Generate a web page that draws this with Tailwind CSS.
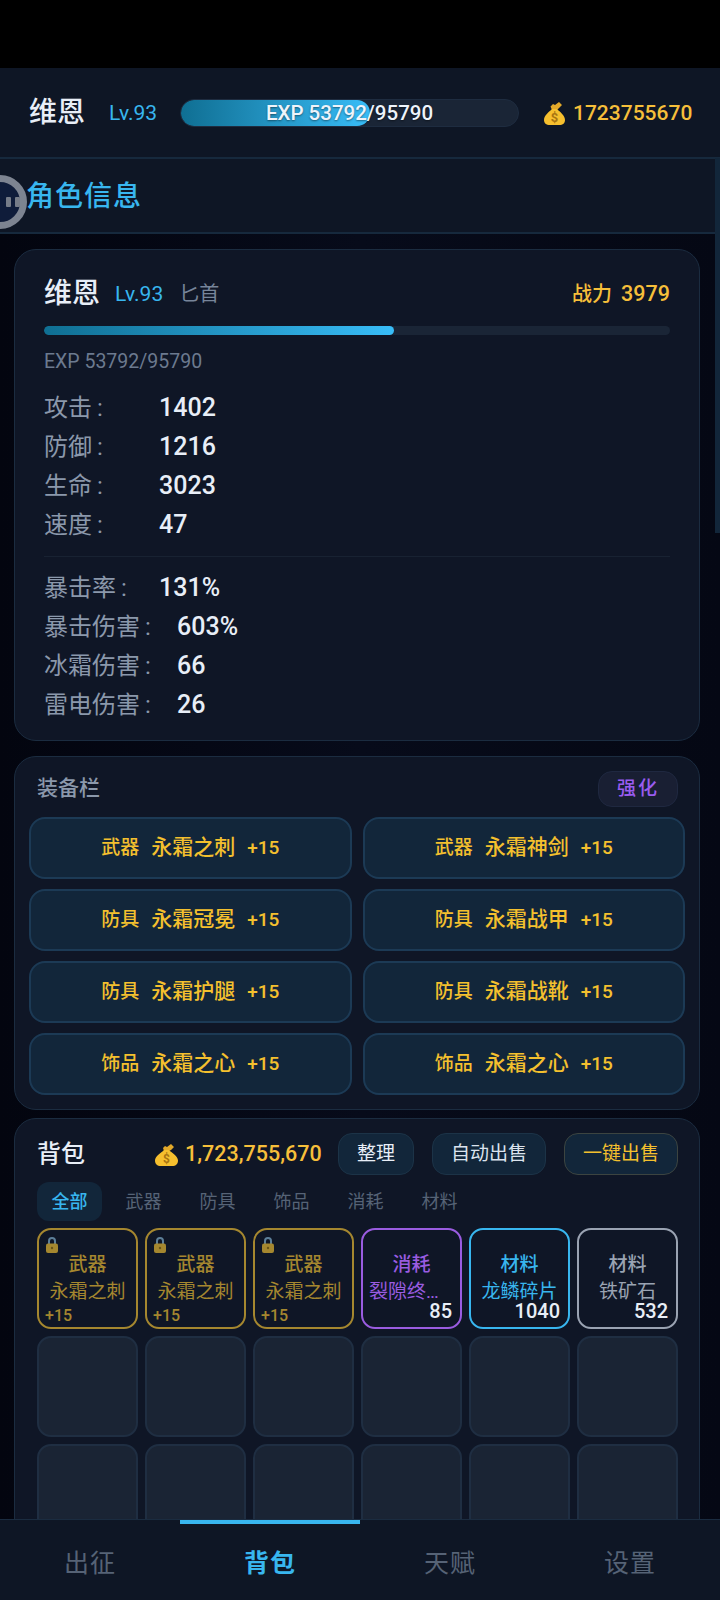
<!DOCTYPE html>
<html lang="en">
<head>
  <meta charset="UTF-8" />
  <title>角色信息</title>
  <script src="https://cdn.jsdelivr.net/npm/@tailwindcss/browser@4"></script>
</head>
<body class="bg-black font-['Roboto','Noto_Sans_CJK_SC',sans-serif] text-white">
  <div class="relative w-[720px] h-[1600px] overflow-hidden flex flex-col">
    <div class="h-[68px] bg-black shrink-0"></div>

    <!-- top bar -->
    <header class="h-[91px] shrink-0 bg-[#0e1625] border-b-2 border-[#16293d] flex items-center pl-[29px] pt-[1px] whitespace-nowrap">
      <span class="w-[57px] shrink-0 text-[28px] font-medium text-[#e8eef7] leading-none">维恩</span>
      <span class="ml-[23px] w-[50px] shrink-0 text-[21px] text-[#38b6ef] leading-none">Lv.93</span>
      <div class="relative ml-[21px] w-[339px] shrink-0 h-[28px] rounded-full bg-[#1a2536] border border-[#1e2c40] overflow-hidden">
        <div class="h-full w-[189px] rounded-full bg-gradient-to-r from-[#0f6f93] to-[#38bdf8]"></div>
        <div class="absolute inset-0 flex items-center justify-center text-[20.5px] font-medium text-[#eef4fb] leading-none [text-shadow:0_1px_2px_rgba(0,0,0,0.45)]">EXP 53792/95790</div>
      </div>
      <svg class="ml-[25px] w-[21px] h-[24px] shrink-0" viewBox="0 0 21 24">
        <path d="M6.5 5.5 9 3l2 1 4-3 3 3-3 3-2 2H8z" fill="#e3a92a"/>
        <path d="M8 8h5c3 3 8 6.500 8 11 0 3-2 5-6 5H6c-4 0-6-2-6-5 0-4.500 5-8 8-11z" fill="#f6bf2e"/>
        <text x="10.5" y="21" text-anchor="middle" font-size="13" font-weight="700" fill="#a87412">$</text>
      </svg>
      <span class="ml-[8px] text-[21px] font-medium text-[#f6bf3a] leading-none">1723755670</span>
    </header>

    <!-- page title -->
    <div class="h-[75px] shrink-0 bg-[#0e1625] border-b-2 border-[#16293d] flex items-center pl-[26px] pt-[2px]">
      <span class="text-[28px] tracking-[1px] font-medium text-[#38b6ef] leading-none">角色信息</span>
    </div>

    <!-- scroll area -->
    <main class="flex-1 min-h-0 overflow-hidden bg-gradient-to-r from-[#03050f] via-[#070b1a] to-[#050814] pl-[14px] pr-[20px] pt-[15px]">
      <section class="h-[492px] rounded-[22px] border border-[#1b2c40] bg-[#0f1626] px-[29px] pt-[25px]">
        <div class="flex items-center h-[38px]">
          <span class="text-[28px] font-medium text-[#e8eef7] leading-none">维恩</span>
          <span class="ml-[15px] text-[21px] text-[#38b6ef] leading-none">Lv.93</span>
          <span class="ml-[16px] text-[20px] text-[#77859a] leading-none">匕首</span>
          <span class="ml-auto text-[20px] font-medium text-[#f6bf3a] leading-none">战力</span>
          <span class="ml-[9px] text-[21.500px] font-medium text-[#f6bf3a] leading-none">3979</span>
        </div>
        <div class="mt-[13px] h-[9px] rounded-full bg-[#1a2536] overflow-hidden">
          <div class="h-full w-[350px] rounded-full bg-gradient-to-r from-[#0f6f93] to-[#38bdf8]"></div>
        </div>
        <p class="mt-[15px] text-[19.500px] text-[#6c7a8f] leading-[24px]">EXP 53792/95790</p>

        <dl class="mt-[14px]">
          <div class="flex items-center h-[39px]"><dt class="w-[115px] text-[24px] text-[#8b98ab]">攻击&thinsp;:</dt><dd class="text-[25px] font-medium text-[#e8eef7]">1402</dd></div>
          <div class="flex items-center h-[39px]"><dt class="w-[115px] text-[24px] text-[#8b98ab]">防御&thinsp;:</dt><dd class="text-[25px] font-medium text-[#e8eef7]">1216</dd></div>
          <div class="flex items-center h-[39px]"><dt class="w-[115px] text-[24px] text-[#8b98ab]">生命&thinsp;:</dt><dd class="text-[25px] font-medium text-[#e8eef7]">3023</dd></div>
          <div class="flex items-center h-[39px]"><dt class="w-[115px] text-[24px] text-[#8b98ab]">速度&thinsp;:</dt><dd class="text-[25px] font-medium text-[#e8eef7]">47</dd></div>
        </dl>
        <div class="mt-[12px] border-t border-[#182232]"></div>
        <dl class="mt-[11px]">
          <div class="flex items-center h-[39px]"><dt class="w-[115px] text-[24px] text-[#8b98ab]">暴击率&thinsp;:</dt><dd class="text-[25px] font-medium text-[#e8eef7]">131%</dd></div>
          <div class="flex items-center h-[39px]"><dt class="w-[133px] text-[24px] text-[#8b98ab]">暴击伤害&thinsp;:</dt><dd class="text-[25px] font-medium text-[#e8eef7]">603%</dd></div>
          <div class="flex items-center h-[39px]"><dt class="w-[133px] text-[24px] text-[#8b98ab]">冰霜伤害&thinsp;:</dt><dd class="text-[25px] font-medium text-[#e8eef7]">66</dd></div>
          <div class="flex items-center h-[39px]"><dt class="w-[133px] text-[24px] text-[#8b98ab]">雷电伤害&thinsp;:</dt><dd class="text-[25px] font-medium text-[#e8eef7]">26</dd></div>
        </dl>
      </section>

      <section class="mt-[15px] h-[354px] rounded-[22px] border border-[#1b2c40] bg-[#0f1626] px-[14px] pt-[14px]">
        <div class="flex items-center justify-between h-[36px] pl-[8px] pr-[7px]">
          <span class="text-[21px] font-medium text-[#8b98ab]">装备栏</span>
          <button class="w-[80px] h-[36px] rounded-[14px] bg-[#191f33] border border-[#1f2840] text-[19px] tracking-[2px] font-medium text-[#9a5cf0]">强化</button>
        </div>
        <div class="mt-[10px] grid grid-cols-2 gap-x-[11px] gap-y-[10px]">
          <div class="h-[62px] rounded-[16px] bg-[#12263a] border-2 border-[#1c3a55] flex items-center justify-center gap-[12px] text-[19px] font-medium text-[#f4c02e]"><span>武器</span><span class="text-[21px]">永霜之刺</span><span>+15</span></div>
          <div class="h-[62px] rounded-[16px] bg-[#12263a] border-2 border-[#1c3a55] flex items-center justify-center gap-[12px] text-[19px] font-medium text-[#f4c02e]"><span>武器</span><span class="text-[21px]">永霜神剑</span><span>+15</span></div>
          <div class="h-[62px] rounded-[16px] bg-[#12263a] border-2 border-[#1c3a55] flex items-center justify-center gap-[12px] text-[19px] font-medium text-[#f4c02e]"><span>防具</span><span class="text-[21px]">永霜冠冕</span><span>+15</span></div>
          <div class="h-[62px] rounded-[16px] bg-[#12263a] border-2 border-[#1c3a55] flex items-center justify-center gap-[12px] text-[19px] font-medium text-[#f4c02e]"><span>防具</span><span class="text-[21px]">永霜战甲</span><span>+15</span></div>
          <div class="h-[62px] rounded-[16px] bg-[#12263a] border-2 border-[#1c3a55] flex items-center justify-center gap-[12px] text-[19px] font-medium text-[#f4c02e]"><span>防具</span><span class="text-[21px]">永霜护腿</span><span>+15</span></div>
          <div class="h-[62px] rounded-[16px] bg-[#12263a] border-2 border-[#1c3a55] flex items-center justify-center gap-[12px] text-[19px] font-medium text-[#f4c02e]"><span>防具</span><span class="text-[21px]">永霜战靴</span><span>+15</span></div>
          <div class="h-[62px] rounded-[16px] bg-[#12263a] border-2 border-[#1c3a55] flex items-center justify-center gap-[12px] text-[19px] font-medium text-[#f4c02e]"><span>饰品</span><span class="text-[21px]">永霜之心</span><span>+15</span></div>
          <div class="h-[62px] rounded-[16px] bg-[#12263a] border-2 border-[#1c3a55] flex items-center justify-center gap-[12px] text-[19px] font-medium text-[#f4c02e]"><span>饰品</span><span class="text-[21px]">永霜之心</span><span>+15</span></div>
        </div>
      </section>

      <section class="mt-[8px] h-[420px] rounded-t-[22px] border border-[#1b2c40] bg-[#0f1626] pl-[22px] pr-[21px] pt-[14px]">
        <div class="flex items-center h-[42px]">
          <span class="text-[24px] font-medium text-[#e8eef7]">背包</span>
          <svg class="ml-[70px] w-[23px] h-[23px]" viewBox="0 0 23 23">
            <path d="M8 5 10 3l2 1 4-3 3 3-3 3-2 1H9z" fill="#e3a92a"/>
            <path d="M9 7h5c3 3 9 6 9 10.500 0 3.500-2 5.500-6 5.500H6c-4 0-6-2-6-5.500C0 13 6 10 9 7z" fill="#f6bf2e"/>
            <text x="11.500" y="20" text-anchor="middle" font-size="12" font-weight="700" fill="#a87412">$</text>
          </svg>
          <span class="ml-[7px] text-[21.500px] font-medium text-[#f6bf3a]">1,723,755,670</span>
          <button class="ml-auto w-[76px] h-[42px] rounded-[14px] bg-[#12263a] border border-[#1c3347] text-[19px] text-[#e8eef7]">整理</button>
          <button class="ml-[18px] w-[114px] h-[42px] rounded-[14px] bg-[#12263a] border border-[#1c3347] text-[19px] text-[#dbe3ee]">自动出售</button>
          <button class="ml-[18px] w-[114px] h-[42px] rounded-[14px] bg-[#12263a] border border-[#3c4440] text-[19px] text-[#f4c02e]">一键出售</button>
        </div>

        <nav class="mt-[7px] flex gap-[9px] h-[39px] text-[18px] text-[#566376]">
          <span class="w-[65px] rounded-[12px] bg-[#12263a] text-[#38b6ef] font-medium flex items-center justify-center">全部</span>
          <span class="w-[65px] flex items-center justify-center">武器</span>
          <span class="w-[65px] flex items-center justify-center">防具</span>
          <span class="w-[65px] flex items-center justify-center">饰品</span>
          <span class="w-[65px] flex items-center justify-center">消耗</span>
          <span class="w-[65px] flex items-center justify-center">材料</span>
        </nav>

        <div class="mt-[7px] grid grid-cols-6 gap-[7px]">
          <div class="relative h-[101px] rounded-[14px] border-2 border-[#a5872f] flex flex-col items-center pt-[23px] text-[#a5872f]">
            <svg class="absolute left-[7px] top-[7px] w-[12px] h-[16px]" viewBox="0 0 12 16"><path d="M3 7V4a3 3 0 0 1 6 0v3" fill="none" stroke="#5d7f99" stroke-width="2"/><rect y="6.500" width="12" height="9.500" rx="2" fill="#a5872f"/><circle cx="6" cy="11" r="1.200" fill="#6a5518"/></svg>
            <span class="text-[19px] font-medium leading-[24px]">武器</span>
            <span class="mt-[4px] text-[19px] leading-[22px]">永霜之刺</span>
            <span class="absolute left-[6px] bottom-[1px] text-[16px] font-medium leading-[20px]">+15</span>
          </div>
          <div class="relative h-[101px] rounded-[14px] border-2 border-[#a5872f] flex flex-col items-center pt-[23px] text-[#a5872f]">
            <svg class="absolute left-[7px] top-[7px] w-[12px] h-[16px]" viewBox="0 0 12 16"><path d="M3 7V4a3 3 0 0 1 6 0v3" fill="none" stroke="#5d7f99" stroke-width="2"/><rect y="6.500" width="12" height="9.500" rx="2" fill="#a5872f"/><circle cx="6" cy="11" r="1.200" fill="#6a5518"/></svg>
            <span class="text-[19px] font-medium leading-[24px]">武器</span>
            <span class="mt-[4px] text-[19px] leading-[22px]">永霜之刺</span>
            <span class="absolute left-[6px] bottom-[1px] text-[16px] font-medium leading-[20px]">+15</span>
          </div>
          <div class="relative h-[101px] rounded-[14px] border-2 border-[#a5872f] flex flex-col items-center pt-[23px] text-[#a5872f]">
            <svg class="absolute left-[7px] top-[7px] w-[12px] h-[16px]" viewBox="0 0 12 16"><path d="M3 7V4a3 3 0 0 1 6 0v3" fill="none" stroke="#5d7f99" stroke-width="2"/><rect y="6.500" width="12" height="9.500" rx="2" fill="#a5872f"/><circle cx="6" cy="11" r="1.200" fill="#6a5518"/></svg>
            <span class="text-[19px] font-medium leading-[24px]">武器</span>
            <span class="mt-[4px] text-[19px] leading-[22px]">永霜之刺</span>
            <span class="absolute left-[6px] bottom-[1px] text-[16px] font-medium leading-[20px]">+15</span>
          </div>
          <div class="relative h-[101px] rounded-[14px] border-2 border-[#9a5ce0] flex flex-col items-center pt-[23px] text-[#9a5ce0]">
            <span class="text-[19px] font-medium leading-[24px]">消耗</span>
            <span class="mt-[4px] w-[85px] whitespace-nowrap text-[19px] leading-[22px]">裂隙终<span class="tracking-[1px]">…</span></span>
            <span class="absolute right-[8px] bottom-[8px] text-[20px] font-medium leading-[16px] text-[#e8eef7]">85</span>
          </div>
          <div class="relative h-[101px] rounded-[14px] border-2 border-[#38b6ef] flex flex-col items-center pt-[23px] text-[#38b6ef]">
            <span class="text-[19px] font-medium leading-[24px]">材料</span>
            <span class="mt-[4px] text-[19px] leading-[22px]">龙鳞碎片</span>
            <span class="absolute right-[8px] bottom-[8px] text-[20px] font-medium leading-[16px] text-[#e8eef7]">1040</span>
          </div>
          <div class="relative h-[101px] rounded-[14px] border-2 border-[#9aa3b2] flex flex-col items-center pt-[23px] text-[#9aa3b2]">
            <span class="text-[19px] font-medium leading-[24px]">材料</span>
            <span class="mt-[4px] text-[19px] leading-[22px]">铁矿石</span>
            <span class="absolute right-[8px] bottom-[8px] text-[20px] font-medium leading-[16px] text-[#e8eef7]">532</span>
          </div>
          <div class="h-[101px] rounded-[14px] border-2 border-[#1f2e42] bg-[#1a2434]"></div>
          <div class="h-[101px] rounded-[14px] border-2 border-[#1f2e42] bg-[#1a2434]"></div>
          <div class="h-[101px] rounded-[14px] border-2 border-[#1f2e42] bg-[#1a2434]"></div>
          <div class="h-[101px] rounded-[14px] border-2 border-[#1f2e42] bg-[#1a2434]"></div>
          <div class="h-[101px] rounded-[14px] border-2 border-[#1f2e42] bg-[#1a2434]"></div>
          <div class="h-[101px] rounded-[14px] border-2 border-[#1f2e42] bg-[#1a2434]"></div>
          <div class="h-[101px] rounded-[14px] border-2 border-[#1f2e42] bg-[#1a2434]"></div>
          <div class="h-[101px] rounded-[14px] border-2 border-[#1f2e42] bg-[#1a2434]"></div>
          <div class="h-[101px] rounded-[14px] border-2 border-[#1f2e42] bg-[#1a2434]"></div>
          <div class="h-[101px] rounded-[14px] border-2 border-[#1f2e42] bg-[#1a2434]"></div>
          <div class="h-[101px] rounded-[14px] border-2 border-[#1f2e42] bg-[#1a2434]"></div>
          <div class="h-[101px] rounded-[14px] border-2 border-[#1f2e42] bg-[#1a2434]"></div>
        </div>
      </section>
    </main>

    <!-- bottom tabs -->
    <footer class="h-[81px] shrink-0 bg-[#0e1625] border-t border-[#1b2c40] grid grid-cols-4 text-[25px] text-[#566376]">
      <div class="flex items-center justify-center pt-[7px] tracking-[1px]">出征</div>
      <div class="relative flex items-center justify-center pt-[7px] tracking-[1px] font-bold text-[#38b6ef]">
        <div class="absolute top-0 inset-x-0 h-[4px] bg-[#38b6ef]"></div>背包
      </div>
      <div class="flex items-center justify-center pt-[7px] tracking-[1px]">天赋</div>
      <div class="flex items-center justify-center pt-[7px] tracking-[1px]">设置</div>
    </footer>

    <!-- scrollbar thumb -->
    <div class="absolute right-0 top-[158px] w-[5px] h-[375px] bg-[#12263a]"></div>

    <!-- floating pause ball -->
    <div class="absolute left-[-27px] top-[175px] w-[54px] h-[54px] rounded-full bg-[#0f1c3a] border-[7px] border-[#7d8491] flex items-center justify-end gap-[4px]">
      <span class="w-[5px] h-[10px] rounded-[1px] bg-[#767c88]"></span>
      <span class="w-[5px] h-[10px] rounded-[1px] bg-[#767c88]"></span>
    </div>
  </div>
</body>
</html>
